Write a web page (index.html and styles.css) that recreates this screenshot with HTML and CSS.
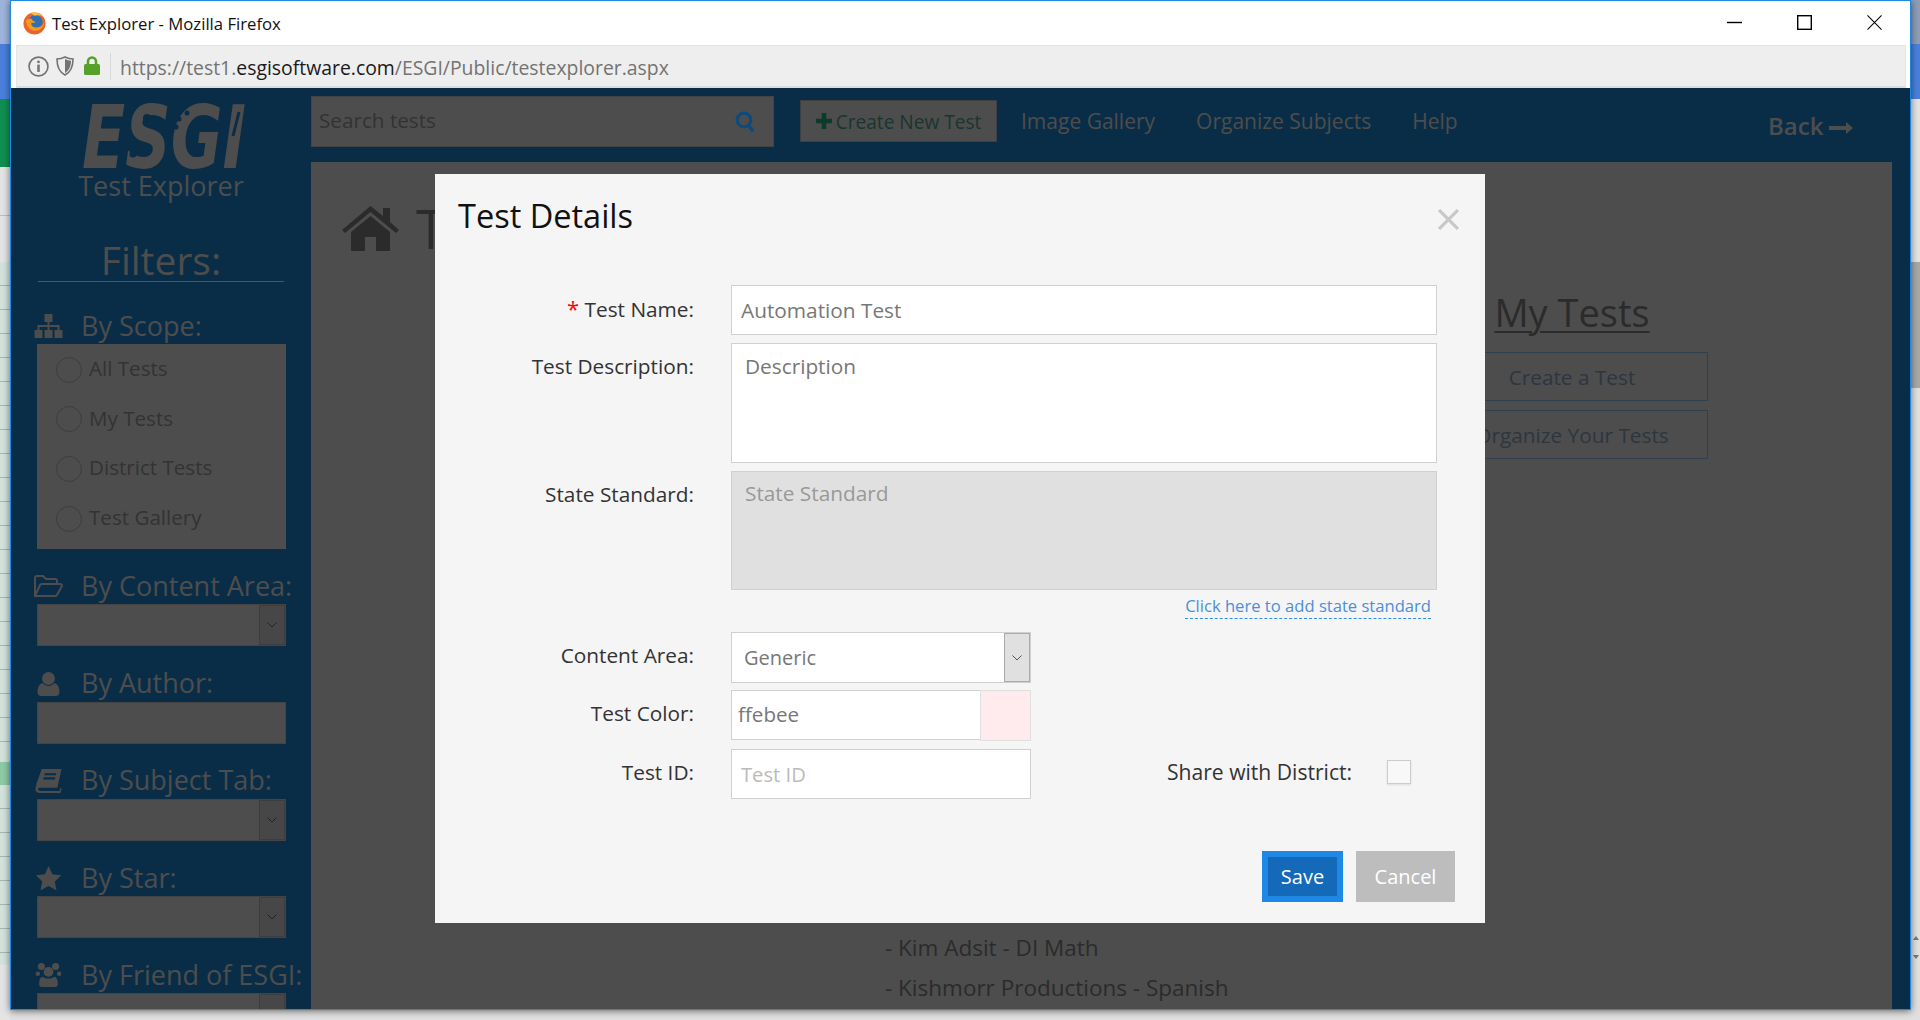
FILE: index.html
```html
<!DOCTYPE html>
<html lang="en">
<head>
<meta charset="utf-8">
<title>Test Explorer</title>
<link rel="stylesheet" href="styles.css">
</head>
<body>
<div class="desktop">
  <div class="strip strip-left">
    <div class="band band-periwinkle"></div>
    <div class="band band-blue"></div>
    <div class="band band-green"></div>
    <div class="band band-grey"></div>
    <div class="band band-sheet"></div>
    <div class="band band-hilite"></div>
    <div class="band band-sheet2"></div>
    <div class="band band-end"></div>
  </div>
  <div class="strip strip-right">
    <div class="band band-periwinkle-r"></div>
    <div class="band band-blue"></div>
    <div class="band band-grey-r"></div>
    <div class="band band-thumb"></div>
    <div class="band band-track">
      <span class="arrow-up"></span>
      <span class="arrow-down"></span>
    </div>
  </div>

  <div class="window">
    <div class="titlebar">
      <svg class="ff-logo" viewBox="0 0 24 24"><circle cx="12" cy="12" r="11.5" fill="#e8642a"/><circle cx="13" cy="10.5" r="7.5" fill="#2f6fb5"/><path d="M3 9c1 8 7 12 13 10 3-1 6-4 6-8-2 4-6 6-10 5-3-1-4-3-3-5 2 1 4 0 4-1-2 0-3-1-4-3-2 0-5 0-6 2z" fill="#f39a21"/><path d="M8 1c4-1 9 0 12 4-3-2-6-2-8-1z" fill="#f7c12f"/></svg>
      <span class="title-text">Test Explorer - Mozilla Firefox</span>
      <div class="win-controls">
        <svg class="win-btn" viewBox="0 0 16 16"><path d="M0 8h16" class="win-line"/></svg>
        <svg class="win-btn" viewBox="0 0 16 16"><rect x=".75" y=".75" width="14.5" height="14.5" class="win-line"/></svg>
        <svg class="win-btn" viewBox="0 0 16 16"><path d="M.5.5l15 15M15.5.5l-15 15" class="win-line-thin"/></svg>
      </div>
    </div>
    <div class="addressbar">
      <svg class="addr-info" viewBox="0 0 20 20"><circle cx="10" cy="10" r="9" class="addr-stroke"/><circle cx="10" cy="5.6" r="1.3" class="addr-fill"/><rect x="8.8" y="8.2" width="2.4" height="7" class="addr-fill"/></svg>
      <svg class="addr-shield" viewBox="0 0 18 20"><path d="M1 3c3 0 6-1 8-2 2 1 5 2 8 2 0 7-2 13-8 16C3 16 1 10 1 3z" class="addr-stroke"/><path d="M9 3c2 1 4 1.500 6 1.700C15 10 13 14.500 9 17z" class="addr-fill"/></svg>
      <svg class="addr-lock" viewBox="0 0 16 19"><path d="M4 8V5.500a4 4 0 0 1 8 0V8" class="lock-shackle"/><rect y="8" width="16" height="11" rx="1.500" class="lock-body"/></svg>
      <span class="addr-sep"></span>
      <span class="url"><span class="url-dim">https://test1.</span><span class="url-host">esgisoftware.com</span><span class="url-dim">/ESGI/Public/testexplorer.aspx</span></span>
    </div>

    <div class="app">
      <aside class="sidebar">
        <svg class="logo" viewBox="0 -14 170 84"><text x="3" y="66" textLength="164" lengthAdjust="spacingAndGlyphs" class="logo-text">ESGI</text><circle cx="68" cy="16" r="4" class="logo-cut"/><circle cx="54" cy="52" r="3.500" class="logo-cut"/><circle cx="108" cy="11" r="2.500" class="logo-cut"/><circle cx="100" cy="17" r="2.500" class="logo-cut"/><circle cx="97" cy="25" r="2.500" class="logo-cut"/><path d="M160 10l-6 24" class="logo-slit"/></svg>
        <div class="app-name">Test Explorer</div>
        <div class="filters-title">Filters:</div>

        <div class="group">
          <div class="group-head">
            <svg class="g-icon" viewBox="0 0 28 24"><path d="M10 0h8v8h-3v3h10v5h3v8h-8v-8h3v-3h-8v3h3v8h-8v-8h3v-3H5v3h3v8H0v-8h3v-5h10V8h-3z"/></svg>
            <span>By Scope:</span>
          </div>
          <div class="scope-box">
            <label class="radio-row"><span class="radio"></span>All Tests</label>
            <label class="radio-row"><span class="radio"></span>My Tests</label>
            <label class="radio-row"><span class="radio"></span>District Tests</label>
            <label class="radio-row"><span class="radio"></span>Test Gallery</label>
          </div>
        </div>

        <div class="group">
          <div class="group-head">
            <svg class="g-icon" viewBox="0 0 29 22"><path d="M1 21V3a2 2 0 0 1 2-2h6l3 3h9a2 2 0 0 1 2 2v3M1 21l5-11a2 2 0 0 1 2-1h18a2 2 0 0 1 2 2l-5 9a2 2 0 0 1-2 1z" class="g-open"/></svg>
            <span>By Content Area:</span>
          </div>
          <div class="sel"><span class="sel-btn"><svg class="chev" viewBox="0 0 10 6"><path d="M.5.5 5 5 9.500.5"/></svg></span></div>
        </div>

        <div class="group">
          <div class="group-head">
            <svg class="g-icon" viewBox="0 0 22 24"><circle cx="11" cy="6.500" r="6.500"/><path d="M0 20c0-5 2-8 5-9 2 2 4 3 6 3s4-1 6-3c3 1 5 4 5 9 0 3-2 4-4 4H4c-2 0-4-1-4-4z"/></svg>
            <span>By Author:</span>
          </div>
          <div class="sel sel-plain"></div>
        </div>

        <div class="group">
          <div class="group-head">
            <svg class="g-icon" viewBox="0 0 25 23"><path d="M6 0h19l-4 18H4c-1 0-2 1-1.500 2S4 21 5 21h18l1-3 1 1-1 4H4c-3 0-4-2-4-4 0-1 1-3 1-5zM9 4l-.5 2h11l.5-2zM8 8l-.5 2h11l.5-2z" fill-rule="evenodd"/></svg>
            <span>By Subject Tab:</span>
          </div>
          <div class="sel"><span class="sel-btn"><svg class="chev" viewBox="0 0 10 6"><path d="M.5.5 5 5 9.500.5"/></svg></span></div>
        </div>

        <div class="group">
          <div class="group-head">
            <svg class="g-icon" viewBox="0 0 25 24"><path d="M12.500 0l3.900 8.200 9 1.100-6.600 6.200 1.700 8.900-8-4.400-8 4.400 1.700-8.900L0 9.300l9-1.100z"/></svg>
            <span>By Star:</span>
          </div>
          <div class="sel"><span class="sel-btn"><svg class="chev" viewBox="0 0 10 6"><path d="M.5.5 5 5 9.500.5"/></svg></span></div>
        </div>

        <div class="group">
          <div class="group-head">
            <svg class="g-icon" viewBox="0 0 29 27"><circle cx="6.500" cy="4" r="4"/><circle cx="22.500" cy="4" r="4"/><circle cx="14.500" cy="10" r="5.500"/><circle cx="2.500" cy="12" r="2.500"/><circle cx="26.500" cy="12" r="2.500"/><path d="M4 24c0-5 1-8 4-8.500 2 1.500 4 2 6.500 2s4.500-.5 6.500-2c3 .5 4 3.500 4 8.500 0 2-1 3-3 3H7c-2 0-3-1-3-3z"/></svg>
            <span>By Friend of ESGI:</span>
          </div>
          <div class="sel"><span class="sel-btn"></span></div>
        </div>
      </aside>

      <div class="workspace">
        <header class="topnav">
          <div class="search">
            <span class="search-ph">Search tests</span>
            <svg class="search-icon" viewBox="0 0 20 22"><circle cx="9" cy="9" r="6.800"/><path d="M13.500 14l4.500 6.500"/></svg>
          </div>
          <div class="create-btn"><svg class="plus" viewBox="0 0 14 14"><path d="M5 0h4v5h5v4H9v5H5V9H0V5h5z"/></svg><span class="create-text">Create New Test</span></div>
          <nav class="nav-links">
            <a class="nav-link">Image Gallery</a>
            <a class="nav-link">Organize Subjects</a>
            <a class="nav-link">Help</a>
          </nav>
          <div class="back">Back<svg class="back-arrow" viewBox="0 0 24 12"><path d="M0 4h17V0l7 6-7 6V8H0z"/></svg></div>
        </header>
        <main class="panel">
          <div class="panel-head">
            <svg class="home" viewBox="0 0 57 45"><path d="M28.500 0 41 10V2h7v14l9 8-3 3-25.500-21L3 27l-3-3z"/><path d="M9 26 28.500 10 48 26v19H34V31H23v14H9z"/></svg>
            <span class="panel-title">Test Explorer</span>
          </div>
          <section class="my-tests">
            <h2 class="my-title">My Tests</h2>
            <div class="outline-btn">Create a Test</div>
            <div class="outline-btn">Organize Your Tests</div>
          </section>
          <ul class="friends">
            <li>- Kim Adsit - DI Math</li>
            <li>- Kishmorr Productions - Spanish</li>
          </ul>
        </main>
      </div>
    </div>

    <div class="modal">
      <div class="modal-head">
        <h1 class="modal-title">Test Details</h1>
        <svg class="modal-close" viewBox="0 0 20 20"><path d="M1 1l18 18M19 1 1 19"/></svg>
      </div>
      <form class="form">
        <label class="f-label"><span class="req">*</span> Test Name:</label>
        <div class="f-input f-value">Automation Test</div>

        <label class="f-label f-label-ta">Test Description:</label>
        <div class="f-area">Description</div>

        <label class="f-label f-label-ss">State Standard:</label>
        <div class="f-area f-disabled">State Standard</div>

        <div class="f-spacer"></div>
        <div class="f-link-row"><a class="f-link">Click here to add state standard</a></div>

        <label class="f-label f-label-ca">Content Area:</label>
        <div class="f-short f-select"><span class="f-sel-text">Generic</span><span class="f-sel-btn"><svg class="chev-sm" viewBox="0 0 10 6"><path d="M.5.5 5 5 9.500.5"/></svg></span></div>

        <label class="f-label f-label-low">Test Color:</label>
        <div class="f-short f-color"><span class="f-color-text">ffebee</span><span class="f-swatch"></span></div>

        <label class="f-label f-label-id">Test ID:</label>
        <div class="f-id-row">
          <div class="f-short f-input f-ph">Test ID</div>
          <span class="share-label">Share with District:</span>
          <span class="share-box"></span>
        </div>
      </form>
      <div class="modal-foot">
        <button class="btn btn-save" type="button">Save</button>
        <button class="btn btn-cancel" type="button">Cancel</button>
      </div>
    </div>
  </div>
</div>
</body>
</html>
```

FILE: styles.css
```css
* { box-sizing: border-box; }
html, body { margin: 0; padding: 0; }
body { width: 1920px; height: 1020px; overflow: hidden; font-family: "Open Sans", "Noto Sans", sans-serif; background: #e0e0e0; }

.desktop { position: relative; width: 1920px; height: 1020px; overflow: hidden; }
.strip { position: absolute; top: 0; height: 1020px; display: flex; flex-direction: column; }
.strip-left { left: 0; width: 10px; }
.strip-right { right: 0; width: 9px; }
.band { flex: none; }
.band-periwinkle { height: 44px; background: #9fb4da; }
.band-blue { height: 55px; background: #4a80dc; }
.band-green { height: 68px; background: #109050; }
.band-grey { height: 95px; background: repeating-linear-gradient(#e4e4e4 0 48px, #bdbdbd 48px 49px); }
.band-sheet { height: 500px; background: repeating-linear-gradient(#d3e2db 0 23px, #aab5af 23px 24px); }
.band-hilite { height: 23px; background: #8fcaa6; }
.band-sheet2 { height: 180px; background: repeating-linear-gradient(#d3e2db 0 23px, #aab5af 23px 24px); }
.band-end { height: 55px; background: #e4e4e4; }
.band-periwinkle-r { height: 44px; background: #8f9db5; }
.band-grey-r { height: 163px; background: #e4e4e4; }
.band-thumb { height: 126px; background: #a8a8a8; }
.band-track { height: 588px; background: #e0e0e0; position: relative; }
.arrow-up, .arrow-down { position: absolute; left: 2px; width: 0; height: 0; border-left: 3px solid transparent; border-right: 3px solid transparent; }
.arrow-up { top: 548px; border-bottom: 4px solid #777; }
.arrow-down { top: 567px; border-top: 4px solid #777; }

.window { position: absolute; left: 10px; top: 0; width: 1901px; height: 1010px; background: #fff; border: 1px solid #1e88e5; box-shadow: 0 1px 7px rgba(0,0,0,.55); display: flex; flex-direction: column; }

.titlebar { flex: none; height: 44px; display: flex; align-items: center; padding-left: 12px; }
.ff-logo { width: 23px; height: 23px; margin-right: 6px; }
.title-text { font-size: 16.7px; color: #111; }
.win-controls { margin-left: auto; display: flex; gap: 55px; margin-right: 28px; margin-top: -2px; }
.win-btn { width: 15px; height: 15px; display: block; overflow: visible; }
.win-line { fill: none; stroke: #000; stroke-width: 1.5; }
.win-line-thin { fill: none; stroke: #000; stroke-width: 1.1; }

.addressbar { flex: none; height: 43px; margin: 0 4px 0 5px; background: #eee; border: 1px solid #e4e4e4; border-bottom: 2px solid #ddd; display: flex; align-items: center; padding-left: 11px; }
.addr-info { width: 21px; height: 21px; margin-right: 7px; }
.addr-shield { width: 18px; height: 20px; margin-right: 10px; }
.addr-lock { width: 16px; height: 19px; margin-right: 10px; margin-top: -2px; }
.addr-stroke { fill: none; stroke: #737373; stroke-width: 1.6; }
.addr-fill { fill: #737373; }
.lock-shackle { fill: none; stroke: #57a12b; stroke-width: 2.6; }
.lock-body { fill: #57a12b; }
.addr-sep { width: 1px; height: 27px; background: #d8d8d8; margin-right: 9px; }
.url { font-size: 19.4px; white-space: nowrap; padding-top: 2px; }
.url-dim { color: #737373; }
.url-host { color: #1a1a1a; }

.app { flex: 1; min-height: 0; display: flex; background: #0a2d47; overflow: hidden; }

.sidebar { flex: none; width: 300px; padding: 14px 0 0 23px; overflow: hidden; }
.logo { display: block; width: 170px; height: 84px; margin: -14px 0 0 45px; }
.logo-text { font-family: "DejaVu Sans", sans-serif; font-weight: 700; font-style: italic; font-size: 88px; fill: #4d4d4d; }
.logo-cut { fill: #0a2d47; }
.logo-slit { fill: none; stroke: #0a2d47; stroke-width: 3; }
.app-name { width: 254px; margin-top: -3px; text-align: center; font-size: 27px; line-height: 33px; color: #4d4d4d; white-space: nowrap; }
.filters-title { width: 246px; margin: 36px 0 0 4px; text-align: center; font-size: 39px; line-height: 43px; color: #4d4d4d; border-bottom: 1px solid #43586a; }
.group { margin-bottom: 19.25px; }
.filters-title + .group { margin-top: 26px; }
.group-head { height: 36px; display: flex; align-items: center; font-size: 27px; color: #4d4d4d; white-space: nowrap; }
.group-head span { margin-top: -2px; }
.g-icon { flex: none; width: 29px; height: 24px; margin-right: 18px; fill: #4d4d4d; }
.g-open { fill: none; stroke: #4d4d4d; stroke-width: 2; }

.scope-box { margin-left: 3px; width: 249px; height: 205px; padding-top: 1px; background: #4d4d4d; }
.radio-row { height: 49.6px; display: flex; align-items: center; padding: 0 0 3px 19px; font-size: 20.6px; color: #333; }
.radio { width: 26px; height: 26px; border-radius: 50%; border: 1px solid #3d3d3d; margin: 3px 7px 0 0; flex: none; }

.sel { margin-left: 3px; width: 249px; height: 42px; background: #4d4d4d; border: 1px solid #444; display: flex; justify-content: flex-end; padding: 0; }
.sel-btn { width: 26px; background: #474747; border: 1px solid #3d3d3d; display: flex; align-items: center; justify-content: center; }
.chev { width: 10px; height: 6px; fill: none; stroke: #222; stroke-width: 1; }

.workspace { flex: 1; min-width: 0; display: flex; flex-direction: column; position: relative; }
.topnav { flex: none; height: 74px; position: relative; display: flex; align-items: flex-start; padding-top: 8px; }
.search { width: 463px; height: 51px; background: #4d4d4d; border: 1px solid #444; display: flex; align-items: center; padding: 0 18px 0 7px; justify-content: space-between; font-size: 20.7px; color: #333; }
.search-ph { margin-top: -3px; }
.search-icon { width: 20px; height: 22px; fill: none; stroke: #0d4a7f; stroke-width: 3.2; }
.create-btn { margin: 4px 0 0 26px; width: 197px; height: 42px; background: #4d4d4d; border: 1px solid #3f3f3f; display: flex; align-items: center; justify-content: center; font-size: 19.1px; color: #1a3530; white-space: nowrap; }
.create-text { margin-top: 2px; }
.plus { width: 16px; height: 16px; fill: #0c3a2c; margin-right: 4px; }
.nav-links { display: flex; gap: 41px; margin: 4px 0 0 24px; height: 42px; align-items: center; }
.nav-link { font-size: 21px; color: #4d4d4d; white-space: nowrap; }
.back { position: absolute; left: 1457px; top: 20px; display: flex; align-items: center; font-size: 24px; font-weight: 600; color: #4d4d4d; line-height: 36px; }
.back-arrow { width: 24px; height: 12px; fill: #4d4d4d; margin-left: 6px; margin-top: 3px; }

.panel { flex: 1; margin-right: 18px; min-height: 0; background: #4d4d4d; padding: 44px 0 0 31px; overflow: hidden; color: #2b2b2b; }
.panel-head { height: 45px; display: flex; align-items: center; gap: 17px; }
.home { width: 57px; height: 45px; fill: #2b2b2b; }
.panel-title { font-size: 54px; line-height: 45px; white-space: nowrap; }
.my-tests { width: 272px; margin: 35px 0 0 1094px; display: flex; flex-direction: column; align-items: center; }
.my-title { margin: 0 0 14px; font-size: 38px; font-weight: 400; line-height: 52px; text-decoration: underline; text-decoration-thickness: 2px; text-underline-offset: 4px; }
.outline-btn { width: 272px; height: 49px; border: 1px solid #2f3f4d; margin-bottom: 9px; display: flex; align-items: center; justify-content: center; font-size: 20.8px; color: #2d3640; white-space: nowrap; }
.friends { list-style: none; margin: 460px 0 0 543px; padding: 0; font-size: 22.5px; line-height: 40px; }

.modal { position: absolute; left: 424px; top: 173px; width: 1050px; height: 749px; background: #f5f5f5; display: flex; flex-direction: column; }
.modal-head { height: 111px; padding: 20px 26px 0 23px; display: flex; align-items: flex-start; justify-content: space-between; }
.modal-title { margin: 0; font-size: 32.5px; font-weight: 400; line-height: 44px; color: #111; }
.modal-close { width: 21px; height: 21px; margin-top: 15px; fill: none; stroke: #c8c8c8; stroke-width: 3; }

.form { display: grid; grid-template-columns: 259px 706px; column-gap: 37px; row-gap: 8px; align-items: start; }
.f-label { text-align: right; font-size: 20.8px; line-height: 26px; color: #333; padding-top: 11px; }
.req { color: #f00; font-size: 22px; line-height: 20px; }
.f-input { height: 50px; background: #fff; border: 1px solid #d0d0d0; display: flex; align-items: center; padding-left: 9px; font-size: 20.8px; }
.f-value { color: #777; }
.f-ph { color: #bbb; font-size: 20.2px; padding-bottom: 1px; }
.f-area { height: 120px; background: #fff; border: 1px solid #d0d0d0; padding: 9px 13px; font-size: 20.8px; line-height: 26px; color: #777; }
.f-disabled { height: 119px; background: #e0e0e0; color: #999; padding-top: 8px; }
.f-label-ta { padding-top: 10px; }
.f-label-ss { padding-top: 10px; }
.f-label-ca { padding-top: 10px; }
.f-label-low { padding-top: 9px; }
.f-label-id { padding-top: 11px; }
.f-spacer { height: 26px; }
.f-link-row { height: 26px; display: flex; justify-content: flex-end; align-items: flex-start; padding-right: 6px; }
.f-link { font-size: 16.6px; line-height: 18px; margin-top: -1px; padding-bottom: 3px; color: #4a90d9; border-bottom: 1px dashed #2f8fe6; white-space: nowrap; }
.f-short { width: 300px; }
.f-select { height: 51px; background: #fff; border: 1px solid #d0d0d0; display: flex; align-items: center; justify-content: space-between; padding-left: 12px; font-size: 20px; color: #777; }
.f-sel-btn { width: 26px; height: 49px; background: #e0e0e0; border: 1px solid #aaa; display: flex; align-items: center; justify-content: center; }
.chev-sm { width: 10px; height: 6px; fill: none; stroke: #555; stroke-width: 1; }
.f-color { height: 50px; margin-top: -1px; background: #fff; border: 1px solid #d0d0d0; display: flex; justify-content: space-between; align-items: center; padding-left: 6px; font-size: 20.6px; color: #777; }
.f-color-text { margin-top: -2px; }
.f-swatch { width: 51px; height: 51px; margin: -1px -1px -2px 0; align-self: flex-start; background: #ffebee; border: 1px solid #e0e0e0; }
.f-id-row { display: flex; align-items: center; height: 50px; margin-top: 1px; }
.f-id-row .f-input { flex: none; }
.share-label { margin: -5px 0 0 136px; font-size: 21.1px; color: #333; }
.share-box { width: 24px; height: 24px; margin: -4px 0 0 35px; background: #f8f8f8; border: 1px solid #ccc; box-shadow: 0 1px 2px rgba(0,0,0,.1); }

.modal-foot { margin-top: auto; padding: 0 30px 21px 0; display: flex; justify-content: flex-end; gap: 13px; }
.btn { height: 51px; border: 0; font-family: inherit; font-size: 20px; color: #fff; padding: 0; }
.btn-save { width: 81px; background: #1569b9; border: 6px solid #1e88e5; }
.btn-cancel { width: 99px; background: #bdbdbd; }
```
